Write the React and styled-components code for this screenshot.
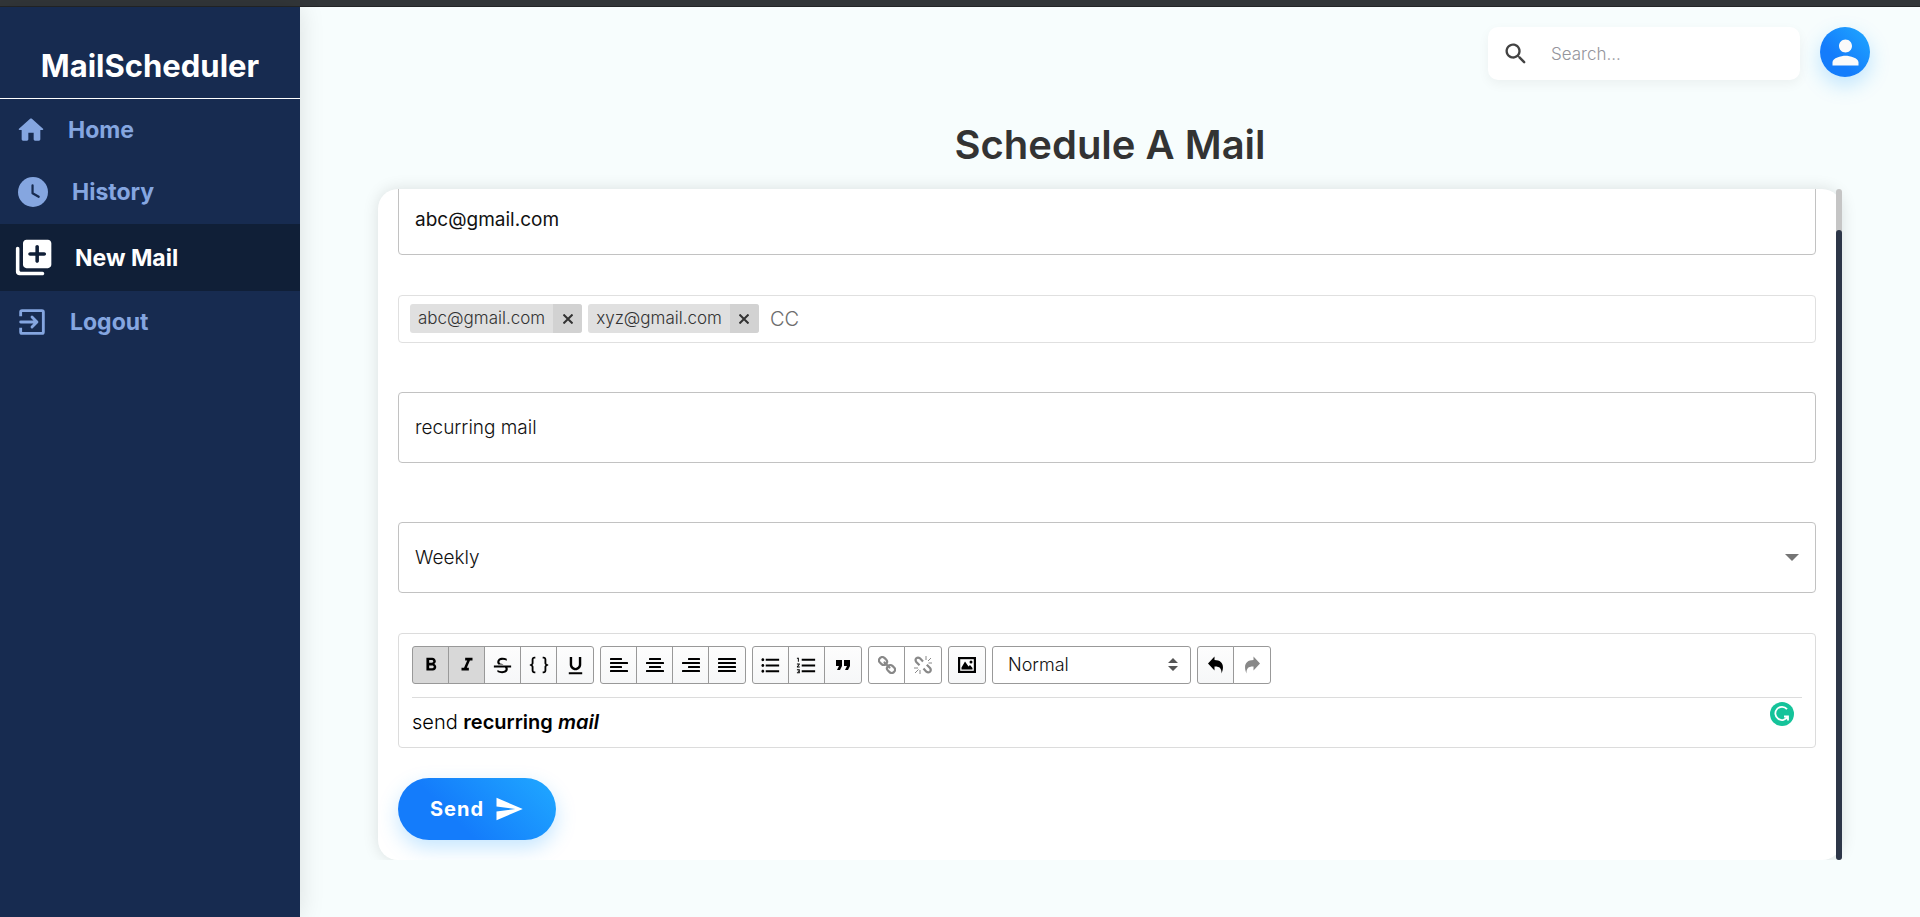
import React, { useState } from 'react';
import styled, { createGlobalStyle, css } from 'styled-components';
import {
  MdFormatBold,
  MdFormatItalic,
  MdFormatListBulleted,
  MdFormatListNumbered,
  MdFormatQuote,
  MdFormatUnderlined,
  MdPerson,
  MdSend,
} from 'react-icons/md';
import { RiBracesLine, RiStrikethrough } from 'react-icons/ri';

const GlobalStyle = createGlobalStyle`
  *, *::before, *::after { box-sizing: border-box; }
  body { margin: 0; background: #f7fdfd; }
  body, button, input, select { font-family: Inter, "Liberation Sans", sans-serif; }
`;

const Page = styled.div`
  display: flex;
  flex-direction: column;
  min-height: 100vh;
`;

const TopStrip = styled.div`
  height: 7px;
  flex: none;
  background: #323639;
  border-bottom: 1px solid #232527;
`;

const Body = styled.div`
  display: flex;
  flex: 1;
`;

const Sidebar = styled.aside`
  width: 300px;
  flex: none;
  background: #172b50;
  box-shadow: 0 0 24px rgba(0, 0, 0, 0.12);
`;

const Brand = styled.h1`
  margin: 0;
  padding: 39px 0 12px;
  border-bottom: 1px solid #fff;
  color: #fff;
  font-size: 31px;
  line-height: 40px;
  font-weight: 700;
  text-align: center;
`;

const Nav = styled.nav`
  padding-top: 1px;
`;

const NavLink = styled.a`
  display: flex;
  align-items: center;
  gap: 21px;
  padding: 14px 15px;
  color: ${(p) => (p.$active ? '#fff' : '#85a6e0')};
  background: ${(p) => (p.$active ? '#101f37' : 'transparent')};
  font-size: 23px;
  line-height: 30px;
  font-weight: 700;
  text-decoration: none;

  svg { display: block; flex: none; }
`;

const Main = styled.main`
  display: flex;
  flex: 1;
  flex-direction: column;
  min-width: 0;
`;

const Header = styled.header`
  display: flex;
  justify-content: flex-end;
  align-items: flex-start;
  gap: 20px;
  padding: 20px 50px 0 20px;
`;

const SearchBox = styled.label`
  display: flex;
  align-items: center;
  gap: 21px;
  width: 312px;
  height: 53px;
  padding: 0 14px;
  border-radius: 10px;
  background: #fff;
  box-shadow: 0 4px 12px rgba(0, 0, 0, 0.05);

  svg { flex: none; }
`;

const SearchInput = styled.input`
  flex: 1;
  min-width: 0;
  padding: 0;
  border: 0;
  outline: 0;
  background: transparent;
  font-size: 17px;
  font-weight: 300;
  color: #444;

  &::placeholder { color: #95959c; opacity: 1; }
`;

const blueGlow = css`
  border: 0;
  color: #fafafa;
  background: linear-gradient(45deg, #147cfb 35%, #1ea2ff 90%);
  box-shadow: 0 8px 20px rgba(30, 160, 255, 0.26);
  cursor: pointer;
`;

const Avatar = styled.button`
  ${blueGlow}
  display: flex;
  align-items: center;
  justify-content: center;
  width: 50px;
  height: 50px;
  padding: 0;
  border-radius: 50%;
`;

const Title = styled.h2`
  margin: 41px 0 20px;
  color: #333;
  font-size: 40px;
  line-height: 48px;
  font-weight: 600;
  text-align: center;
`;

const Card = styled.section`
  display: flex;
  flex: 1 0 0;
  min-height: 660px;
  margin: 0 78px 57px;
  border-radius: 20px;
  background: #fff;
  box-shadow: 0 0 16px rgba(0, 0, 0, 0.12);
  clip-path: inset(-24px -24px 0 -24px);
`;

const Form = styled.form`
  display: flex;
  flex: 1 1 0;
  flex-direction: column;
  justify-content: flex-end;
  min-width: 0;
  height: calc(100vh - 246px);
  min-height: 660px;
  padding: 0 20px 20px;
  overflow: hidden;
`;

const ScrollTrack = styled.div`
  display: flex;
  width: 6px;
  padding-top: 41px;
  border-radius: 3px;
  background: #c5c5c5;
`;

const ScrollThumb = styled.div`
  flex: 1;
  border-radius: 3px;
  background: #2d3648;
`;

const Field = styled.label`
  display: flex;
  align-items: center;
  flex: none;
  height: 71px;
  margin-bottom: ${(p) => p.$after}px;
  padding: 0 16px;
  border: 1px solid #c2c2c2;
  border-radius: 4px;
  color: #757575;
`;

const plainControl = css`
  flex: 1;
  min-width: 0;
  padding: 0;
  border: 0;
  outline: 0;
  background: transparent;
  appearance: none;
  font-weight: 300;
  color: #111;
`;

const FieldInput = styled.input`
  ${plainControl}
  font-size: 19px;
  line-height: 24px;
  font-weight: ${(p) => (p.$strong ? 400 : 300)};
`;

const FieldSelect = styled.select`
  ${plainControl}
  font-size: 19px;
  line-height: 24px;
`;

const ChipsField = styled.div`
  display: flex;
  align-items: center;
  flex: none;
  gap: 6px;
  height: 48px;
  margin-bottom: 49px;
  padding: 0 11px 1px;
  border: 1px solid #e0e0e0;
  border-radius: 4px;
`;

const Chip = styled.span`
  display: flex;
  height: 29px;
  border-radius: 3px;
  overflow: hidden;
  background: #e0e0e0;
  color: #333;
  font-size: 17px;
  line-height: 28px;
  font-weight: 300;
  padding-left: 8px;
  gap: 8px;
`;

const ChipRemove = styled.button`
  display: flex;
  align-items: center;
  justify-content: center;
  width: 29px;
  padding: 0;
  border: 0;
  background: #d2d2d2;
  color: #333;
`;

const ChipInput = styled.input`
  ${plainControl}
  padding-left: 5px;
  font-size: 20px;
  line-height: 24px;

  &::placeholder { color: #6c6c6c; opacity: 1; }
`;

const Editor = styled.div`
  flex: none;
  height: 115px;
  margin-bottom: 30px;
  padding: 12px 13px;
  border: 1px solid #dcdcdc;
  border-radius: 4px;
`;

const Toolbar = styled.div`
  display: flex;
  gap: 6px;
  padding-bottom: 13px;
  border-bottom: 1px solid #dcdcdc;
`;

const ToolGroup = styled.div`
  display: flex;
`;

const ToolButton = styled.button`
  display: flex;
  align-items: center;
  justify-content: center;
  width: 37px;
  height: 38px;
  padding: 0;
  border: 1px solid #999;
  background: ${(p) => (p.$on ? '#d8d8d8' : 'linear-gradient(#fdfdfd, #f6f7f8)')};
  color: #000;

  & + & { margin-left: -1px; }
  &:first-child { border-top-left-radius: 3px; border-bottom-left-radius: 3px; }
  &:last-child { width: 38px; border-top-right-radius: 3px; border-bottom-right-radius: 3px; }
  &:disabled { color: #888; background: #fff; }
`;

const StyleSelect = styled.label`
  display: flex;
  align-items: center;
  width: 199px;
  height: 38px;
  padding: 0 12px 0 15px;
  border: 1px solid #999;
  border-radius: 3px;
  color: #555;
`;

const BlockSelect = styled.select`
  ${plainControl}
  font-size: 18px;
  line-height: 24px;
`;

const EditorBody = styled.div`
  display: flex;
  justify-content: space-between;
  align-items: flex-start;
  padding: 4px 8px 0 0;
`;

const EditorText = styled.p`
  margin: 0;
  padding-top: 8px;
  color: #000;
  font-size: 20px;
  line-height: 24px;
  font-weight: 300;

  strong { font-weight: 600; }
`;

const SendButton = styled.button`
  ${blueGlow}
  display: flex;
  align-items: center;
  align-self: flex-start;
  flex: none;
  gap: 10px;
  height: 62px;
  padding: 0 32px;
  border-radius: 31px;
  color: #fff;
  font-size: 20px;
  font-weight: 700;
  letter-spacing: 1px;
`;

const HomeIcon = () => (
  <svg width="32" height="32" viewBox="0 0 24 24" fill="currentColor">
    <path d="M10 19v-5h4v5c0 .55.45 1 1 1h3c.55 0 1-.45 1-1v-7h1.7c.46 0 .68-.57.33-.87L12.67 3.6c-.38-.34-.96-.34-1.34 0l-8.36 7.53c-.34.3-.13.87.33.87H5v7c0 .55.45 1 1 1h3c.55 0 1-.45 1-1z" />
  </svg>
);

const ClockIcon = () => (
  <svg width="36" height="36" viewBox="0 0 24 24">
    <circle cx="12" cy="12" r="10" fill="currentColor" />
    <path d="M11.7 7.6v5.2l4.1 2.4" fill="none" stroke="#172b50" strokeWidth="1.5" strokeLinecap="round" strokeLinejoin="round" />
  </svg>
);

const NewMailIcon = () => (
  <svg width="39" height="39" viewBox="1.5 1 22 22" fill="currentColor">
    <path d="M3 6c-.55 0-1 .45-1 1v13c0 1.1.9 2 2 2h13c.55 0 1-.45 1-1s-.45-1-1-1H5c-.55 0-1-.45-1-1V7c0-.55-.45-1-1-1zm17-4H8c-1.1 0-2 .9-2 2v12c0 1.1.9 2 2 2h12c1.1 0 2-.9 2-2V4c0-1.1-.9-2-2-2zm-2 9h-3v3c0 .55-.45 1-1 1s-1-.45-1-1v-3h-3c-.55 0-1-.45-1-1s.45-1 1-1h3V6c0-.55.45-1 1-1s1 .45 1 1v3h3c.55 0 1 .45 1 1s-.45 1-1 1z" />
  </svg>
);

const LogoutIcon = () => (
  <svg width="34" height="34" viewBox="0 0 24 24" fill="none" stroke="currentColor" strokeWidth="2" strokeLinecap="round" strokeLinejoin="round">
    <path d="M4 8V5q0-1 1-1h14q1 0 1 1v14q0 1-1 1H5q-1 0-1-1v-3" strokeLinecap="butt" />
    <path d="M4 12h11M12 8.500l3.500 3.500-3.500 3.500" />
  </svg>
);

const SearchIcon = () => (
  <svg width="28" height="28" viewBox="0 0 24 24" fill="#424242">
    <path d="M15.500 14h-.79l-.28-.27c1.200-1.400 1.820-3.310 1.480-5.340-.47-2.780-2.790-5-5.590-5.340-4.230-.52-7.790 3.040-7.270 7.270.34 2.800 2.560 5.120 5.340 5.590 2.030.34 3.940-.28 5.340-1.480l.27.28v.79l4.250 4.250c.41.41 1.080.41 1.490 0s.41-1.080 0-1.490L15.500 14zm-6 0C7.010 14 5 11.990 5 9.500S7.010 5 9.500 5 14 7.010 14 9.500 11.990 14 9.500 14z" />
  </svg>
);

const alignRows = {
  left: [[0, 12], [0, 18], [0, 12], [0, 18]],
  center: [[3, 12], [0, 18], [3, 12], [0, 18]],
  right: [[6, 12], [0, 18], [6, 12], [0, 18]],
  justify: [[0, 18], [0, 18], [0, 18], [0, 18]],
};

const AlignIcon = ({ kind }) => (
  <svg width="18" height="14" viewBox="0 0 18 14" fill="currentColor">
    {alignRows[kind].map(([x, w], i) => (
      <rect key={i} x={x} y={i * 4} width={w} height="2" rx="0.5" />
    ))}
  </svg>
);

const LinkIcon = () => (
  <svg width="18" height="18" viewBox="0 0 18 18" fill="none" stroke="currentColor" strokeWidth="2.200">
    <rect x="-4.200" y="-3.200" width="8.400" height="6.400" rx="3" transform="translate(5 5) rotate(45)" />
    <rect x="-4.200" y="-3.200" width="8.400" height="6.400" rx="3" transform="translate(13 13) rotate(45)" />
    <path d="M6.500 6.500l5 5" strokeLinecap="round" />
  </svg>
);

const UnlinkIcon = () => (
  <svg width="18" height="18" viewBox="0 0 18 18" fill="none" stroke="currentColor">
    <path d="M9 5.500L6 2.300Q4 .8 2.300 2.300.8 4 2.300 6l3.200 3.200M9.500 12.500l2.800 3.200q2 1.500 3.700 0 1.500-1.700 0-3.700l-3.200-3.200" strokeWidth="2.200" />
    <path d="M12 0v4M14 5l3-3M14.500 7H18M0 12h4M1 17l3.500-3.500M6 14v4" strokeWidth="1" />
  </svg>
);

const PictureIcon = () => (
  <svg width="18" height="16" viewBox="0 0 18 16">
    <rect x="1" y="1" width="16" height="14" fill="#fff" stroke="currentColor" strokeWidth="2.400" />
    <path d="M3.500 12.500V10.500L7 4.500l3.500 5L12 8l2.500 3v1.500z" fill="currentColor" />
    <circle cx="13" cy="5" r="1.500" fill="currentColor" />
  </svg>
);

const ArrowIcon = ({ flip }) => (
  <svg width="16" height="18" viewBox="0 0 16 18" fill="currentColor">
    <path
      d="M0 7.500L6.500.5v3.600c7.500.1 10.500 5 7 13.400.2-5-1.800-7.200-7-7v4z"
      transform={flip ? 'matrix(-1 0 0 1 16 0)' : undefined}
    />
  </svg>
);

const GrammarIcon = () => (
  <svg width="24" height="24" viewBox="0 0 24 24" role="img" aria-label="Grammar check">
    <circle cx="12" cy="12" r="12" fill="#15c39a" />
    <path d="M17 7.200a6.600 6.600 0 1 0 .8 7.300M14 14.500h4v4" fill="none" stroke="#fff" strokeWidth="1.800" />
  </svg>
);

const toolGroups = [
  [
    { name: 'Bold', icon: <MdFormatBold size={22} />, on: true },
    { name: 'Italic', icon: <MdFormatItalic size={22} />, on: true },
    { name: 'Strikethrough', icon: <RiStrikethrough size={23} /> },
    { name: 'Monospace', icon: <RiBracesLine size={22} /> },
    { name: 'Underline', icon: <MdFormatUnderlined size={23} /> },
  ],
  [
    { name: 'Align left', icon: <AlignIcon kind="left" /> },
    { name: 'Align center', icon: <AlignIcon kind="center" /> },
    { name: 'Align right', icon: <AlignIcon kind="right" /> },
    { name: 'Justify', icon: <AlignIcon kind="justify" /> },
  ],
  [
    { name: 'Bulleted list', icon: <MdFormatListBulleted size={23} /> },
    { name: 'Numbered list', icon: <MdFormatListNumbered size={23} /> },
    { name: 'Quote', icon: <MdFormatQuote size={24} /> },
  ],
  [
    { name: 'Link', icon: <LinkIcon />, disabled: true },
    { name: 'Remove link', icon: <UnlinkIcon />, disabled: true },
  ],
  [{ name: 'Image', icon: <PictureIcon /> }],
];

const historyTools = [
  { name: 'Undo', icon: <ArrowIcon /> },
  { name: 'Redo', icon: <ArrowIcon flip />, disabled: true },
];

const navItems = [
  { label: 'Home', icon: <HomeIcon /> },
  { label: 'History', icon: <ClockIcon /> },
  { label: 'New Mail', icon: <NewMailIcon />, active: true },
  { label: 'Logout', icon: <LogoutIcon /> },
];

const Tools = ({ items }) => (
  <ToolGroup>
    {items.map((t) => (
      <ToolButton key={t.name} type="button" aria-label={t.name} $on={t.on} disabled={t.disabled}>
        {t.icon}
      </ToolButton>
    ))}
  </ToolGroup>
);

export default function App() {
  const [copies, setCopies] = useState(['abc@gmail.com', 'xyz@gmail.com']);

  return (
    <Page>
      <GlobalStyle />
      <TopStrip />
      <Body>
        <Sidebar>
          <Brand>MailScheduler</Brand>
          <Nav>
            {navItems.map((item) => (
              <NavLink key={item.label} href="#" $active={item.active}>
                {item.icon}
                {item.label}
              </NavLink>
            ))}
          </Nav>
        </Sidebar>
        <Main>
          <Header>
            <SearchBox>
              <SearchIcon />
              <SearchInput type="text" aria-label="Search" placeholder="Search..." />
            </SearchBox>
            <Avatar type="button" aria-label="Account">
              <MdPerson size={39} />
            </Avatar>
          </Header>
          <Title>Schedule A Mail</Title>
          <Card>
            <Form onSubmit={(e) => e.preventDefault()}>
              <Field $after={40}>
                <FieldInput $strong type="text" aria-label="To" defaultValue="abc@gmail.com" />
              </Field>
              <ChipsField>
                {copies.map((mail) => (
                  <Chip key={mail}>
                    {mail}
                    <ChipRemove
                      type="button"
                      aria-label={`Remove ${mail}`}
                      onClick={() => setCopies(copies.filter((m) => m !== mail))}
                    >
                      <svg width="10" height="10" viewBox="0 0 10 10" stroke="currentColor" strokeWidth="2">
                        <path d="M.5.5l9 9M9.500.5l-9 9" />
                      </svg>
                    </ChipRemove>
                  </Chip>
                ))}
                <ChipInput type="text" aria-label="CC" placeholder="CC" />
              </ChipsField>
              <Field $after={59}>
                <FieldInput type="text" aria-label="Subject" defaultValue="recurring mail" />
              </Field>
              <Field $after={40}>
                <FieldSelect aria-label="Repeat" defaultValue="Weekly">
                  <option>Weekly</option>
                </FieldSelect>
                <svg width="14" height="7" viewBox="0 0 14 7" fill="currentColor">
                  <path d="M0 0h14L7 7z" />
                </svg>
              </Field>
              <Editor>
                <Toolbar>
                  {toolGroups.map((items) => (
                    <Tools key={items[0].name} items={items} />
                  ))}
                  <StyleSelect>
                    <BlockSelect aria-label="Block style" defaultValue="Normal">
                      <option>Normal</option>
                    </BlockSelect>
                    <svg width="10" height="14" viewBox="0 0 10 14" fill="currentColor">
                      <path d="M0 5l5-5 5 5zM0 8h10l-5 5z" />
                    </svg>
                  </StyleSelect>
                  <Tools items={historyTools} />
                </Toolbar>
                <EditorBody>
                  <EditorText>
                    send <strong>recurring <em>mail</em></strong>
                  </EditorText>
                  <GrammarIcon />
                </EditorBody>
              </Editor>
              <SendButton type="submit">
                Send
                <MdSend size={30} />
              </SendButton>
            </Form>
            <ScrollTrack>
              <ScrollThumb />
            </ScrollTrack>
          </Card>
        </Main>
      </Body>
    </Page>
  );
}
